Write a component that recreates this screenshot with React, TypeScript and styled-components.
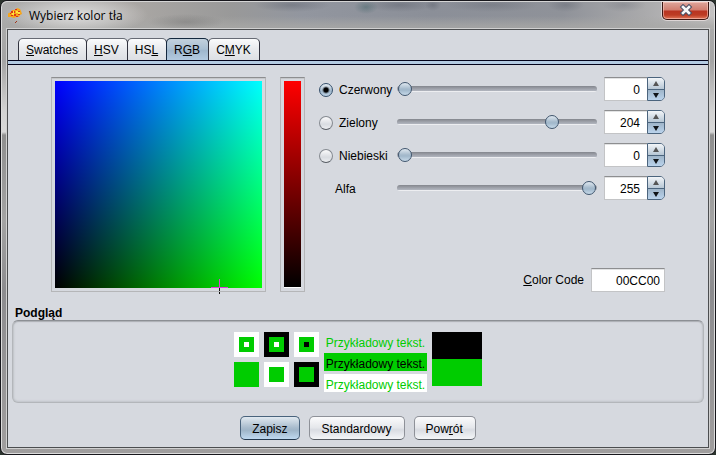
import React, { useState } from "react";
import styled, { createGlobalStyle, css } from "styled-components";

const GlobalStyle = createGlobalStyle`
  *, *::before, *::after { box-sizing: border-box; }
  html { background: #2b332d; }
  body { margin: 0; }
  body, button, input {
    font-family: "Liberation Sans", Arial, sans-serif;
    font-size: 12px;
    line-height: 14px;
    color: #000;
  }
  u { text-underline-offset: 1px; text-decoration-thickness: 1px; text-decoration-skip-ink: none; }
`;

const WindowFrame = styled.div`
  display: flex;
  flex-direction: column;
  min-height: 100vh;
  border: 1px solid #17171c;
  border-radius: 7px;
  box-shadow: inset 0 0 0 1px #dcdcdc;
  background: linear-gradient(to bottom, #b0b0b0 0, #a4a4a4 60px, #d2d2d2 110px, #d8d8d8 131px, #8f8f8f 134px, #a3a3a3 220px, #8c8c8f 290px, #a09e9e 100%);
`;

const TitleBar = styled.header`
  display: flex;
  align-items: flex-start;
  height: 28px;
  padding: 0 5px 0 6px;
  margin: 0 1px;
  border-top: 1px solid #d5d5d5;
  border-radius: 6px 6px 0 0;
  background:
    radial-gradient(ellipse 72px 20px at 74px 13px, rgba(235, 235, 235, 0.8), rgba(220, 220, 220, 0.45) 60%, transparent),
    radial-gradient(ellipse 38px 7px at 290px 3px, rgba(85, 90, 102, 0.4), transparent),
    radial-gradient(ellipse 12px 7px at 364px 5px, rgba(60, 95, 100, 0.45), transparent),
    radial-gradient(ellipse 34px 7px at 398px 3px, rgba(85, 90, 102, 0.4), transparent),
    radial-gradient(ellipse 8px 6px at 431px 3px, rgba(85, 90, 102, 0.4), transparent),
    radial-gradient(ellipse 46px 7px at 490px 3px, rgba(85, 90, 102, 0.3), transparent),
    radial-gradient(ellipse 18px 7px at 564px 3px, rgba(85, 90, 102, 0.35), transparent),
    radial-gradient(ellipse 22px 7px at 622px 3px, rgba(85, 90, 102, 0.25), transparent),
    radial-gradient(ellipse 38px 8px at 184px 20px, rgba(90, 90, 90, 0.3), transparent),
    linear-gradient(to bottom, transparent 14px, rgba(168, 168, 166, 0.75) 24px),
    linear-gradient(to right, #adadad 0, #aaa7a4 130px, #999 230px, #92969f 300px, #8b8f98 430px, #8f9299 560px, #a9a9ab 640px, #c4c2c2 100%);
`;

const AppIcon = styled.svg`
  width: 16px;
  height: 16px;
  margin-top: 6px;
  flex: none;
`;

const Title = styled.h1`
  flex: 1;
  margin: 6px 0 0 5px;
  font: 400 12px/16px "Open Sans", "Noto Sans", sans-serif;
`;

const CloseButton = styled.button`
  display: grid;
  justify-content: center;
  align-content: start;
  width: 47px;
  height: 18px;
  padding: 2px 0 0;
  border: 1px solid #3c1713;
  border-top: 0;
  border-radius: 0 0 5px 5px;
  background: linear-gradient(to bottom, #dda69c 0, #d17d6f 8px, #b93422 9px, #bd3c24 13px, #e0775a 100%);
  box-shadow: inset 0 0 0 1px rgba(255, 210, 200, 0.55), 0 0 0 1px rgba(240, 230, 230, 0.7);
`;

const Client = styled.main`
  flex: 1;
  margin: 0 6px 6px;
  padding: 8px 0 7px;
  border: 1px solid #4c4e50;
  box-shadow: 0 0 0 1px #d0d0d0;
  background: #d6d9df;
`;

const TabList = styled.div`
  display: flex;
  padding-left: 10px;
`;

const Tab = styled.button<{ $active: boolean }>`
  height: 22px;
  margin-right: -1px;
  padding: 0 8px 0 7px;
  border: 1px solid #30323e;
  border-top-color: #666a74;
  border-bottom: 0;
  border-radius: 5px 5px 0 0;
  background: linear-gradient(to bottom, #fafbfc, #e9ebee 45%, #dcdfe4);
  ${(p) =>
    p.$active &&
    css`
      border-color: #14283e;
      background: linear-gradient(to bottom, #c3d1dd, #a9bfd2 48%, #9fb7cd 55%, #b3cae0);
    `}
`;

const TabRule = styled.div`
  height: 5px;
  border: solid #03031a;
  border-width: 1px 0;
  background: #b4cbe2;
`;

const Chooser = styled.section`
  display: flex;
  gap: 14px;
  padding: 12px 43px 0;
`;

const Well = styled.div`
  flex: none;
  padding: 3px;
  border: 1px solid #b5b6b8;
  border-top-color: #8d8e90;
  box-shadow: inset 0 1px 0 #c6c8cb;
`;

const ColorField = styled.div`
  position: relative;
  width: 207px;
  height: 207px;
  background: linear-gradient(to right, #000, #0f0), linear-gradient(to top, #000, #00f);
  background-blend-mode: screen;
`;

const Crosshair = styled.svg`
  position: absolute;
  width: 17px;
  height: 17px;
  margin: -8px;
`;

const ChannelStrip = styled.div`
  width: 17px;
  height: 207px;
  border-bottom: 1px solid #fff;
  background: linear-gradient(to bottom, #f00, #000);
`;

const Controls = styled.div`
  display: flex;
  flex: 1;
  min-width: 0;
  flex-direction: column;
  justify-content: space-between;
`;

const Channels = styled.div`
  display: grid;
  gap: 9px;
`;

const ChannelRow = styled.div`
  display: grid;
  grid-template-columns: 78px 1fr 61px;
  align-items: center;
  height: 24px;
`;

const ChannelLabel = styled.label<{ $plain?: boolean }>`
  display: flex;
  align-items: center;
  gap: 6px;
  padding-left: ${(p) => (p.$plain ? 16 : 0)}px;
  padding-top: 2px;
`;

const Radio = styled.input`
  appearance: none;
  width: 14px;
  height: 14px;
  margin: 0;
  border: 1px solid #858a91;
  border-bottom-color: #565b62;
  border-radius: 50%;
  background: linear-gradient(to bottom, #fbfbfc, #d9dce1 60%, #eceef1);
  &:checked {
    border-color: #35506b;
    background:
      radial-gradient(circle at center, #000 0, #000 2px, rgba(0, 0, 0, 0.4) 3px, transparent 4px),
      linear-gradient(to bottom, #e6edf3, #9fb6ca 60%, #bed4e8);
  }
`;

const Slider = styled.input`
  appearance: none;
  display: block;
  width: calc(100% - 7px);
  height: 16px;
  margin: 0;
  padding: 0 1px;
  background: none;
  &::-webkit-slider-runnable-track {
    height: 6px;
    margin: 0 -1px;
    padding: 0 1px;
    border-radius: 3px;
    background: linear-gradient(to bottom, #83868d 0, #979aa2 2px, #a9adb6 4px, #b2b6bf 5px, #edeef1 5px);
  }
  &::-webkit-slider-thumb {
    appearance: none;
    width: 14px;
    height: 14px;
    margin-top: -4px;
    border: 1px solid #40566e;
    border-radius: 50%;
    background: linear-gradient(to bottom, #dfe8f0, #a4b9cb 50%, #a2b9cc 60%, #c6d9e9);
  }
`;

const Spinner = styled.div`
  display: grid;
  grid-template-columns: 1fr 18px;
  height: 24px;
`;

const TextField = styled.input`
  width: 100%;
  min-width: 0;
  height: 24px;
  padding: 1px 7px 0 4px;
  border: 1px solid #c3c4c6;
  border-top-color: #8d8e90;
  border-radius: 0;
  box-shadow: inset 0 1px 0 #e2e3e4;
  background: #fff;
  text-align: right;
`;

const SpinnerField = styled(TextField)`
  border-right: 0;
`;

const Steps = styled.div`
  display: grid;
  grid-template-rows: 1fr 1fr;
  overflow: hidden;
  border: 1px solid #4b647d;
  border-radius: 0 5px 5px 0;
`;

const Step = styled.button<{ $down?: boolean }>`
  display: grid;
  place-items: center;
  padding: 0;
  border: 0;
  background: linear-gradient(to bottom, #f2f5f8, #b7c7d5);
  ${(p) =>
    p.$down &&
    css`
      border-top: 1px solid #4b647d;
      background: linear-gradient(to bottom, #9fb5c9, #bad3ec);
    `}
`;

const CodeRow = styled.div`
  display: flex;
  align-items: center;
  justify-content: flex-end;
  gap: 7px;
`;

const CodeField = styled(TextField)`
  width: 74px;
  padding-right: 4px;
`;

const SectionTitle = styled.h2`
  margin: 14px 7px 0;
  font: inherit;
  font-weight: 700;
`;

const PreviewPanel = styled.section`
  display: flex;
  justify-content: center;
  gap: 5px;
  margin: 0 4px;
  padding: 11px 11px 10px;
  border: 1px solid #b3b6ba;
  border-top-color: #8c8f94;
  border-radius: 6px;
  box-shadow: inset 0 1px 1px #abaeb4, inset 1px 0 2px #c2c5ca, inset -1px -1px 2px #c4c7cc;
`;

const Tiles = styled.div`
  display: grid;
  grid-template-columns: repeat(3, 25px);
  grid-auto-rows: 25px;
  gap: 5px;
`;

const Square = styled.div<{ $fill: string; $inset?: number }>`
  display: grid;
  padding: ${(p) => p.$inset ?? 0}px;
  background: ${(p) => p.$fill};
`;

const Samples = styled.div`
  display: grid;
  grid-auto-rows: 18px;
  gap: 3px;
`;

const Sample = styled.div<{ $ink: string; $fill: string }>`
  padding: 4px 2px 0;
  color: ${(p) => p.$ink};
  background: ${(p) => p.$fill};
  white-space: nowrap;
`;

const Comparison = styled.div`
  display: grid;
  grid-template-columns: 50px;
  grid-auto-rows: 27px;
`;

const Actions = styled.footer`
  display: flex;
  justify-content: center;
  gap: 9px;
  margin-top: 13px;
`;

const ActionButton = styled.button<{ $primary?: boolean }>`
  height: 24px;
  padding: 1px 12px 0 11px;
  border: 1px solid #8e9198;
  border-bottom-color: #555a61;
  border-radius: 5px;
  background: linear-gradient(to bottom, #fbfbfc, #e5e7eb 48%, #d9dce2 58%, #f4f6f8);
  ${(p) =>
    p.$primary &&
    css`
      border-color: #49637c;
      border-bottom-color: #23384e;
      background: linear-gradient(to bottom, #e1e9f0, #a9bccd 48%, #9fb5c8 60%, #bfd9f0);
    `}
`;

const tabs = [
  { before: "", key: "S", after: "watches" },
  { before: "", key: "H", after: "SV" },
  { before: "HS", key: "L", after: "" },
  { before: "R", key: "G", after: "B" },
  { before: "C", key: "M", after: "YK" },
];

const channels = [
  { id: "red", name: "Czerwony", radio: true },
  { id: "green", name: "Zielony", radio: true },
  { id: "blue", name: "Niebieski", radio: true },
  { id: "alpha", name: "Alfa", radio: false },
];

const SAMPLE = "Przykładowy tekst.";

const FIELD_MAX = 206;

const clamp = (n: number) => Math.max(0, Math.min(255, Math.round(n) || 0));

const fieldOffset = (value: number) => Math.floor((value / 255) * FIELD_MAX);

function Arrow({ down }: { down?: boolean }) {
  return (
    <svg width="6" height="5" viewBox="0 0 6 5" aria-hidden="true">
      <path d={down ? "M0 0h6L3 5z" : "M0 5h6L3 0z"} fill={down ? "#101418" : "#555"} />
    </svg>
  );
}

export default function App() {
  const [tab, setTab] = useState(3);
  const [axis, setAxis] = useState("red");
  const [values, setValues] = useState([0, 204, 0, 255]);

  const update = (index: number, value: number) =>
    setValues((old) => old.map((v, i) => (i === index ? clamp(value) : v)));

  const code = values
    .slice(0, 3)
    .map((v) => v.toString(16).padStart(2, "0"))
    .join("")
    .toUpperCase();
  const color = `#${code}`;

  return (
    <>
      <GlobalStyle />
      <WindowFrame>
        <TitleBar>
          <AppIcon viewBox="0 0 16 16" aria-hidden="true">
            <path d="M1 5l2-1 1-2 3 0 2-2 3 1 1 2 1 3-2 1-1 2-3 0-2 1-3-1-3 0 0-2-1-1z" fill="#f6a51b" />
            <path d="M3 3h2v2H3zM7 1h2v1H7zM10 3h2v1h-2zM3 7h2v1H3zM6 6h2v2H6zM10 6h2v1h-2zM6 3h1v2H6zM2 5h1v1H2zM8 8h2v1H8z" fill="#dc3519" />
            <path d="M5 3h1v2H5zM8 3h2v2H8zM4 5h2v2H4zM10 4h2v2h-2z" fill="#ffe43c" />
            <path d="M8 13h1v1H8zM7 14h1v1H7z" fill="#a33418" />
          </AppIcon>
          <Title>Wybierz kolor tła</Title>
          <CloseButton aria-label="Zamknij">
            <svg width="14" height="12" viewBox="0 0 14 12" aria-hidden="true">
              <path d="M4 3l6 6M10 3l-6 6" stroke="#4b5064" strokeWidth="4.6" strokeLinecap="square" />
              <path d="M4 3l6 6M10 3l-6 6" stroke="#f7f7f7" strokeWidth="2.6" strokeLinecap="square" />
            </svg>
          </CloseButton>
        </TitleBar>

        <Client>
          <TabList role="tablist">
            {tabs.map((t, i) => (
              <Tab key={i} role="tab" aria-selected={i === tab} $active={i === tab} onClick={() => setTab(i)}>
                {t.before}
                <u>{t.key}</u>
                {t.after}
              </Tab>
            ))}
          </TabList>
          <TabRule />

          <Chooser>
            <Well>
              <ColorField>
                <Crosshair
                  viewBox="0 0 17 17"
                  aria-hidden="true"
                  style={{ left: fieldOffset(values[1]), top: FIELD_MAX - fieldOffset(values[2]) }}
                >
                  <path d="M0 8h17v1H0zM8 0h1v9H8z" fill="#dc3ddc" />
                  <path d="M8 9h1v3H8zM8 13h1v2H8z" fill="#111" />
                </Crosshair>
              </ColorField>
            </Well>
            <Well>
              <ChannelStrip />
            </Well>

            <Controls>
              <Channels>
                {channels.map((c, i) => (
                  <ChannelRow key={c.id}>
                    <ChannelLabel htmlFor={c.radio ? `axis-${c.id}` : `value-${c.id}`} $plain={!c.radio}>
                      {c.radio && (
                        <Radio
                          type="radio"
                          name="axis"
                          id={`axis-${c.id}`}
                          checked={axis === c.id}
                          onChange={() => setAxis(c.id)}
                        />
                      )}
                      {c.name}
                    </ChannelLabel>
                    <Slider
                      type="range"
                      min={0}
                      max={255}
                      aria-label={c.name}
                      value={values[i]}
                      onChange={(e) => update(i, Number(e.target.value))}
                    />
                    <Spinner>
                      <SpinnerField
                        id={`value-${c.id}`}
                        aria-label={c.name}
                        inputMode="numeric"
                        value={values[i]}
                        onChange={(e) => update(i, Number(e.target.value))}
                      />
                      <Steps>
                        <Step aria-label={`${c.name} +1`} onClick={() => update(i, values[i] + 1)}>
                          <Arrow />
                        </Step>
                        <Step $down aria-label={`${c.name} -1`} onClick={() => update(i, values[i] - 1)}>
                          <Arrow down />
                        </Step>
                      </Steps>
                    </Spinner>
                  </ChannelRow>
                ))}
              </Channels>
              <CodeRow>
                <label htmlFor="color-code">
                  <u>C</u>olor Code
                </label>
                <CodeField id="color-code" value={code} readOnly />
              </CodeRow>
            </Controls>
          </Chooser>

          <SectionTitle>Podgląd</SectionTitle>
          <PreviewPanel>
            <Tiles>
              {[["#fff", "#fff"], ["#000", "#fff"], ["#fff", "#000"]].map(([outer, inner], i) => (
                <Square key={i} $fill={outer} $inset={5}>
                  <Square $fill={color} $inset={5}>
                    <Square $fill={inner} />
                  </Square>
                </Square>
              ))}
              {[color, "#fff", "#000"].map((outer) => (
                <Square key={outer} $fill={outer} $inset={5}>
                  <Square $fill={color} />
                </Square>
              ))}
            </Tiles>
            <Samples>
              <Sample $ink={color} $fill="transparent">{SAMPLE}</Sample>
              <Sample $ink="#000" $fill={color}>{SAMPLE}</Sample>
              <Sample $ink={color} $fill="#fff">{SAMPLE}</Sample>
            </Samples>
            <Comparison>
              <Square $fill="#000" />
              <Square $fill={color} />
            </Comparison>
          </PreviewPanel>

          <Actions>
            <ActionButton $primary>Zapisz</ActionButton>
            <ActionButton>Standardowy</ActionButton>
            <ActionButton>
              Pow<u>r</u>ót
            </ActionButton>
          </Actions>
        </Client>
      </WindowFrame>
    </>
  );
}
